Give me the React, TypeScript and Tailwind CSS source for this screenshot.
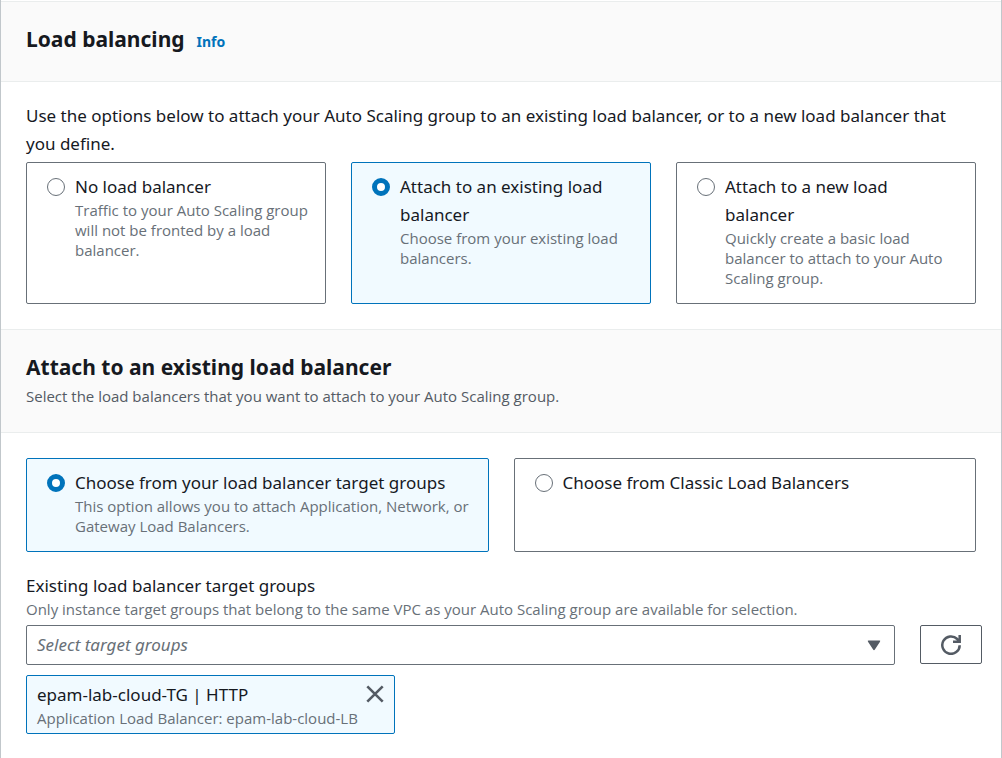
import { useState } from "react";
import type { ReactNode } from "react";

type TileProps = {
  name: string;
  value: string;
  title: string;
  description?: string;
  selected: string;
  onSelect: (value: string) => void;
};

const hintText = "block pb-px font-['Open_Sans','Noto_Sans',sans-serif] text-[15px] leading-5";

function Tile({ name, value, title, description, selected, onSelect }: TileProps) {
  const checked = selected === value;
  return (
    <label
      className={`flex flex-1 basis-0 items-start gap-[10px] rounded-[2px] border pt-[10px] pr-[15px] pb-[14px] pl-5 ${
        checked ? "border-[#0073bb] bg-[#f1faff]" : "border-[#687078] bg-white"
      }`}
    >
      <input
        type="radio"
        name={name}
        value={value}
        checked={checked}
        onChange={() => onSelect(value)}
        className="mt-[5px] size-[18px] shrink-0 appearance-none rounded-full border border-[#687078] bg-white checked:border-[5px] checked:border-[#0073bb]"
      />
      <span className="flex flex-col">
        <span className="text-[17px] leading-7">{title}</span>
        {description && <span className={`${hintText} -mt-px text-[#687078]`}>{description}</span>}
      </span>
    </label>
  );
}

function SectionHeader({ children }: { children: ReactNode }) {
  return <header className="border-y border-[#eaeded] bg-[#fafafa] px-[25px] pt-[23px] pb-[25px]">{children}</header>;
}

function RefreshIcon() {
  return (
    <svg viewBox="0 0 20 20" className="size-5" fill="none" stroke="#545b64" strokeWidth="2.5" aria-hidden="true">
      <path d="M18.7 10.2A8.7 8.7 0 1 1 16.2 4l2 2" />
      <path d="M18.7 0v6.7H12" />
      <path d="M15 6.5l3.5-3.5v3.5z" fill="#545b64" stroke="none" />
    </svg>
  );
}

export default function App() {
  const [mode, setMode] = useState("existing");
  const [source, setSource] = useState("target-groups");
  const [attached, setAttached] = useState(true);

  return (
    <main className="min-h-screen border-x border-x-[#c1c7cb] bg-white pt-px font-['Noto_Sans','Open_Sans',sans-serif] text-[#16191f]">
      <section>
        <SectionHeader>
          <div className="flex items-baseline gap-3 pb-[3px]">
            <h2 className="text-[21px] leading-7 font-bold">Load balancing</h2>
            <a href="#info" className="text-[14px] leading-5 font-bold text-[#0073bb]">
              Info
            </a>
          </div>
        </SectionHeader>
        <fieldset className="px-[25px] pt-5 pb-[25px]">
          <p className="text-[17px] leading-7">
            Use the options below to attach your Auto Scaling group to an existing load balancer, or to a new load
            balancer that you define.
          </p>
          <div className="mt-1 flex gap-[25px]">
            <Tile
              name="mode"
              value="none"
              title="No load balancer"
              description="Traffic to your Auto Scaling group will not be fronted by a load balancer."
              selected={mode}
              onSelect={setMode}
            />
            <Tile
              name="mode"
              value="existing"
              title="Attach to an existing load balancer"
              description="Choose from your existing load balancers."
              selected={mode}
              onSelect={setMode}
            />
            <Tile
              name="mode"
              value="new"
              title="Attach to a new load balancer"
              description="Quickly create a basic load balancer to attach to your Auto Scaling group."
              selected={mode}
              onSelect={setMode}
            />
          </div>
        </fieldset>
      </section>

      <section>
        <SectionHeader>
          <h2 className="text-[21px] leading-7 font-bold">Attach to an existing load balancer</h2>
          <p className={`${hintText} mt-[5px] text-[#545b64]`}>
            Select the load balancers that you want to attach to your Auto Scaling group.
          </p>
        </SectionHeader>
        <div className="px-[25px] py-[25px]">
          <div className="flex gap-[25px]">
            <Tile
              name="source"
              value="target-groups"
              title="Choose from your load balancer target groups"
              description="This option allows you to attach Application, Network, or Gateway Load Balancers."
              selected={source}
              onSelect={setSource}
            />
            <Tile
              name="source"
              value="classic"
              title="Choose from Classic Load Balancers"
              selected={source}
              onSelect={setSource}
            />
          </div>

          <label htmlFor="groups" className="mt-5 block text-[17px] leading-7">
            Existing load balancer target groups
          </label>
          <p id="groups-hint" className={`${hintText} -mt-px text-[#687078]`}>
            Only instance target groups that belong to the same VPC as your Auto Scaling group are available for
            selection.
          </p>
          <div className="-mr-[6px] mt-[5px] flex items-start gap-[25px]">
            <div className="relative flex-1">
              <select
                id="groups"
                aria-describedby="groups-hint"
                className="h-10 w-full appearance-none rounded-[2px] border border-[#687078] bg-white px-[10px] text-[17px] text-[#687078] italic"
              >
                <option>Select target groups</option>
              </select>
              <svg
                viewBox="0 0 14 11"
                className="pointer-events-none absolute top-[15px] right-[14px] h-[11px] w-[14px]"
                fill="#545b64"
                aria-hidden="true"
              >
                <path d="M1.6.5h10.8q1.4 0 .6 1.2L7.9 9.6q-.9 1.2-1.8 0L1 1.7Q.2.5 1.6.5z" />
              </svg>
            </div>
            <button
              type="button"
              aria-label="Refresh target groups"
              className="flex h-[39px] w-[62px] items-center justify-center rounded-[2px] border border-[#545b64] bg-white"
            >
              <RefreshIcon />
            </button>
          </div>

          {attached && (
            <div className="mt-[10px] flex w-fit items-start gap-2 rounded-[2px] border border-[#0073bb] bg-[#f1faff] px-[10px] pt-[5px] pb-1">
              <div>
                <div className="text-[17px] leading-7">epam-lab-cloud-TG | HTTP</div>
                <div className={`${hintText} -mt-px text-[#687078]`}>Application Load Balancer: epam-lab-cloud-LB</div>
              </div>
              <button type="button" aria-label="Remove epam-lab-cloud-TG" onClick={() => setAttached(false)} className="mt-1">
                <svg viewBox="0 0 18 18" className="size-[18px]" stroke="#545b64" strokeWidth="2.6" aria-hidden="true">
                  <path d="M1.3 1.3l15.4 15.4M16.7 1.3L1.3 16.7" />
                </svg>
              </button>
            </div>
          )}
        </div>
      </section>
    </main>
  );
}
